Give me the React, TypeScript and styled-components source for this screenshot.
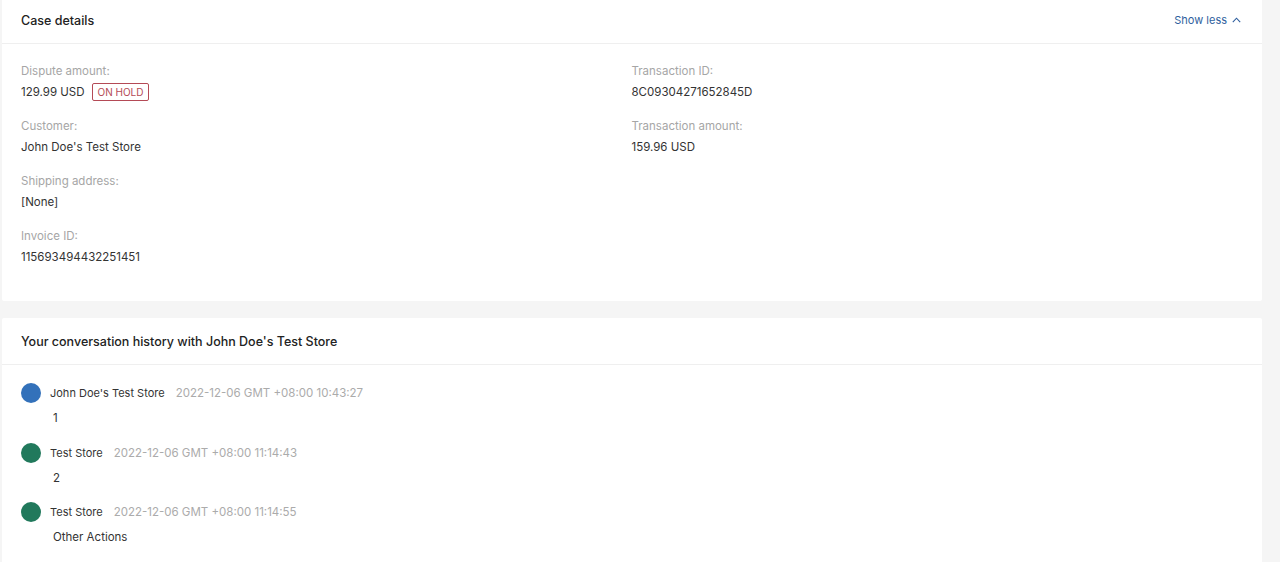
import React, { FC } from 'react'
import styled, { createGlobalStyle } from 'styled-components'

const GlobalStyle = createGlobalStyle`
html, body {
    margin: 0;
    padding: 0;
    background: #f5f5f5;
    font-family: Inter, "Noto Sans", "Liberation Sans", sans-serif;
    color: #333;
    overflow: hidden;
}
`

type Field = { label: string; value: string; badge?: string }
type Message = { author: string; time: string; text: string; color: string }

const leftFields: Field[] = [
    { label: 'Dispute amount', value: '129.99 USD', badge: 'ON HOLD' },
    { label: 'Customer', value: "John Doe's Test Store" },
    { label: 'Shipping address', value: '[None]' },
    { label: 'Invoice ID', value: '115693494432251451' },
]

const rightFields: Field[] = [
    { label: 'Transaction ID', value: '8C09304271652845D' },
    { label: 'Transaction amount', value: '159.96 USD' },
]

const BLUE = '#3371ba'
const GREEN = '#21795c'

const messages: Message[] = [
    { author: "John Doe's Test Store", time: '2022-12-06 GMT +08:00 10:43:27', text: '1', color: BLUE },
    { author: 'Test Store', time: '2022-12-06 GMT +08:00 11:14:43', text: '2', color: GREEN },
    { author: 'Test Store', time: '2022-12-06 GMT +08:00 11:14:55', text: 'Other Actions', color: GREEN },
    { author: "John Doe's Test Store", time: '2022-12-06 GMT +08:00 11:20:08', text: '3', color: BLUE },
]

const StyledPage = styled.div`
margin-top: -3px;
padding: 0 18px 0 2px;
display: flex;
flex-direction: column;
gap: 17px;
`

const StyledCard = styled.section`
background: #fff;
border-radius: 2px;
`

const StyledCardHeader = styled.div`
height: 46px;
padding: 0 21px 0 19px;
display: flex;
align-items: center;
justify-content: space-between;
border-bottom: 1px solid #efefef;

h2 {
    margin: 0;
    font-size: 12.5px;
    font-weight: 500;
    color: #222;
}
`

const StyledToggle = styled.button`
border: none;
background: none;
padding: 0;
display: flex;
align-items: center;
gap: 5px;
font-family: inherit;
font-size: 11px;
color: #2f5f9e;
cursor: pointer;
`

const StyledDetails = styled.div`
padding: 17px 20px 20px 19px;
display: grid;
grid-template-columns: 1fr 1fr;
`

const StyledColumn = styled.div`
display: flex;
flex-direction: column;
`

const StyledField = styled.div`
margin-bottom: 14px;

.label {
    font-size: 11.5px;
    line-height: 20px;
    color: #a6a6a6;
}
.value {
    margin-top: 1px;
    font-size: 11.5px;
    line-height: 20px;
    color: #333;
    display: flex;
    align-items: center;
    gap: 7px;
}
`

const StyledBadge = styled.span`
border: 1px solid #b44a56;
border-radius: 2px;
padding: 0 5px;
font-size: 10px;
line-height: 16px;
color: #b44a56;
`

const StyledHistory = styled.div`
padding: 18px 19px 0;
display: flex;
flex-direction: column;
`

const StyledItem = styled.div`
margin-bottom: 14.5px;
`

const StyledItemHead = styled.div`
display: flex;
align-items: center;
height: 20px;

.name {
    margin-left: 9px;
    font-size: 11px;
    color: #333;
}
.time {
    margin-left: 11px;
    font-size: 11.5px;
    color: #ababab;
}
`

const StyledAvatar = styled.span<{ $color: string }>`
width: 20px;
height: 20px;
border-radius: 50%;
background: ${p => p.$color};
flex-shrink: 0;
`

const StyledText = styled.div`
margin-top: 5px;
padding-left: 32px;
font-size: 11.5px;
line-height: 20px;
color: #333;
`

const FieldBlock: FC<{ field: Field }> = ({ field }) => (
    <StyledField>
        <div className='label'>{field.label}:</div>
        <div className='value'>
            {field.value}
            {field.badge && <StyledBadge>{field.badge}</StyledBadge>}
        </div>
    </StyledField>
)

const App: FC = () => {
    return (
        <>
            <GlobalStyle />
            <StyledPage>
                <StyledCard>
                    <StyledCardHeader>
                        <h2>Case details</h2>
                        <StyledToggle>
                            Show less
                            <svg width='9' height='6' viewBox='0 0 9 6' fill='none'>
                                <path d='M0.8 5.2 L4.5 1.2 L8.2 5.2' stroke='#2f5f9e' strokeWidth='1.1' />
                            </svg>
                        </StyledToggle>
                    </StyledCardHeader>
                    <StyledDetails>
                        <StyledColumn>
                            {leftFields.map(f => <FieldBlock key={f.label} field={f} />)}
                        </StyledColumn>
                        <StyledColumn>
                            {rightFields.map(f => <FieldBlock key={f.label} field={f} />)}
                        </StyledColumn>
                    </StyledDetails>
                </StyledCard>
                <StyledCard>
                    <StyledCardHeader>
                        <h2>Your conversation history with John Doe's Test Store</h2>
                    </StyledCardHeader>
                    <StyledHistory>
                        {messages.map((m, i) => (
                            <StyledItem key={i}>
                                <StyledItemHead>
                                    <StyledAvatar $color={m.color} />
                                    <span className='name'>{m.author}</span>
                                    <span className='time'>{m.time}</span>
                                </StyledItemHead>
                                <StyledText>{m.text}</StyledText>
                            </StyledItem>
                        ))}
                    </StyledHistory>
                </StyledCard>
            </StyledPage>
        </>
    )
}

export default App
